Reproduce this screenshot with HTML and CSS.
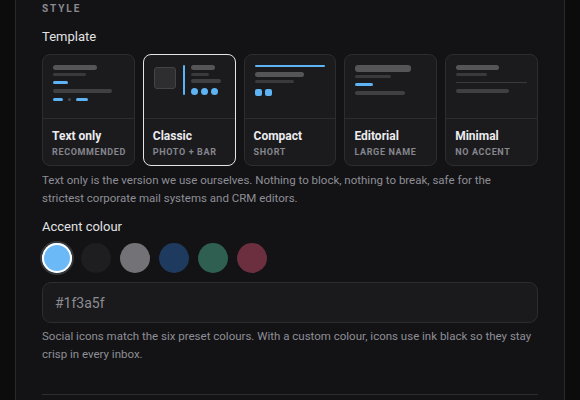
FILE: index.html
```html
<!DOCTYPE html>
<html lang="en">
<head>
<meta charset="utf-8">
<title>Style</title>
<link rel="stylesheet" href="styles.css">
</head>
<body>
<div class="panel">
  <div class="eyebrow">STYLE</div>
  <div class="label">Template</div>
  <div class="cards">
    <div class="card">
      <div class="preview p-text">
        <span class="bar b-44 h5"></span>
        <span class="bar b-33 h3 dim"></span>
        <span class="bar b-15 h3 blue"></span>
        <span class="bar b-59 h4 mid"></span>
        <span class="row">
          <span class="dash"></span><span class="dot"></span><span class="dash w12"></span>
        </span>
      </div>
      <div class="meta"><div class="title">Text only</div><div class="sub">RECOMMENDED</div></div>
    </div>
    <div class="card selected">
      <div class="preview p-classic">
        <span class="photo"></span>
        <span class="vbar"></span>
        <span class="col">
          <span class="bar b-24 h5"></span>
          <span class="bar b-18 h3 dim"></span>
          <span class="bar b-30 h4 mid"></span>
          <span class="circles"><i></i><i></i><i></i></span>
        </span>
      </div>
      <div class="meta"><div class="title">Classic</div><div class="sub">PHOTO + BAR</div></div>
    </div>
    <div class="card">
      <div class="preview p-compact">
        <span class="bar b-70 h2 blue"></span>
        <span class="bar b-49 h5"></span>
        <span class="bar b-39 h3 dim"></span>
        <span class="squares"><i></i><i></i></span>
      </div>
      <div class="meta"><div class="title">Compact</div><div class="sub">SHORT</div></div>
    </div>
    <div class="card">
      <div class="preview p-editorial">
        <span class="bar b-56 h7"></span>
        <span class="bar b-36 h3 dim"></span>
        <span class="bar b-18 h2 blue"></span>
        <span class="bar b-50 h4 mid"></span>
      </div>
      <div class="meta"><div class="title">Editorial</div><div class="sub">LARGE NAME</div></div>
    </div>
    <div class="card">
      <div class="preview p-minimal">
        <span class="bar b-43 h5"></span>
        <span class="bar b-31 h3 dim"></span>
        <span class="rule"></span>
        <span class="bar b-53 h4 mid"></span>
      </div>
      <div class="meta"><div class="title">Minimal</div><div class="sub">NO ACCENT</div></div>
    </div>
  </div>
  <p class="help help1">Text only is the version we use ourselves. Nothing to block, nothing to break, safe for the strictest corporate mail systems and CRM editors.</p>

  <div class="label accent-label">Accent colour</div>
  <div class="swatches">
    <span class="swatch sel" style="background:#6cb9f8"></span>
    <span class="swatch" style="background:#1e1e20"></span>
    <span class="swatch" style="background:#737377"></span>
    <span class="swatch" style="background:#1f3a5f"></span>
    <span class="swatch" style="background:#2f5f50"></span>
    <span class="swatch" style="background:#6b2f3f"></span>
  </div>
  <div class="input">#1f3a5f</div>
  <p class="help help2">Social icons match the six preset colours. With a custom colour, icons use ink black so they stay crisp in every inbox.</p>
  <div class="divider"></div>
</div>
</body>
</html>
```
FILE: styles.css
```css
html, body {
  margin: 0;
  padding: 0;
  background: #0c0c0d;
  font-family: Roboto, "Noto Sans", sans-serif;
  height: 100%;
}
.panel {
  margin: 0 15px;
  min-height: 100%;
  box-sizing: border-box;
  background: #131315;
  border-left: 1px solid #2a2a2d;
  border-right: 1px solid #2a2a2d;
  padding: 0 26px 0 26px;
}
.eyebrow {
  font-size: 10px;
  font-weight: 700;
  letter-spacing: 1.9px;
  color: #8a8a92;
  line-height: 14px;
  padding-top: 2px;
}
.label {
  font-size: 13px;
  line-height: 18px;
  color: #e2e2e4;
  margin-top: 12px;
}
.cards {
  display: grid;
  grid-template-columns: repeat(5, minmax(0, 1fr));
  gap: 8px;
  margin-top: 8px;
}
.card {
  background: #1b1b1e;
  border: 1px solid #2d2d30;
  border-radius: 8px;
  height: 112px;
  box-sizing: border-box;
  display: flex;
  flex-direction: column;
}
.card.selected {
  border-color: #e4e4e6;
}
.preview {
  height: 64px;
  box-sizing: border-box;
  padding: 10px 10px 0 10px;
  border-bottom: 1px solid #2d2d30;
  display: flex;
  flex-direction: column;
  align-items: flex-start;
}
.meta {
  padding: 9px 9px 6px;
}
.title {
  font-size: 12px;
  line-height: 16px;
  font-weight: 700;
  color: #ececee;
}
.sub {
  font-size: 9px;
  line-height: 12px;
  font-weight: 700;
  letter-spacing: 0.65px;
  color: #86868d;
  margin-top: 2px;
  white-space: nowrap;
}
.bar {
  display: block;
  background: #555558;
  border-radius: 3px;
  flex: none;
}
.bar.dim { background: #3a3a3d; }
.bar.mid { background: #404043; }
.bar.blue { background: #5db3f3; }
.h2 { height: 2px; }
.h3 { height: 3px; }
.h4 { height: 4px; }
.h5 { height: 5px; }
.h7 { height: 7px; }
.b-15 { width: 15px; }
.b-18 { width: 18px; }
.b-24 { width: 24px; }
.b-30 { width: 30px; }
.b-31 { width: 31px; }
.b-33 { width: 33px; }
.b-36 { width: 36px; }
.b-39 { width: 39px; }
.b-43 { width: 43px; }
.b-44 { width: 44px; }
.b-49 { width: 49px; }
.b-50 { width: 50px; }
.b-53 { width: 53px; }
.b-56 { width: 56px; }
.b-59 { width: 59px; }
.b-70 { width: 70px; }

/* text only */
.p-text .bar { margin-bottom: 3px; }
.p-text .b-33 { margin-bottom: 5px; }
.p-text .b-15 { margin-bottom: 5px; }
.p-text .b-59 { margin-bottom: 5px; }
.row { display: flex; align-items: center; gap: 5px; }
.dash { width: 10px; height: 3px; border-radius: 2px; background: #5db3f3; }
.dash.w12 { width: 12px; }
.dot { width: 3px; height: 3px; border-radius: 50%; background: #48484b; }

/* classic */
.p-classic { flex-direction: row; align-items: flex-start; }
.photo {
  width: 20px; height: 20px; margin-top: 2px; flex: none;
  background: #2e2e31; border: 1px solid #444447; border-radius: 3px;
}
.vbar { width: 2px; height: 30px; background: #5db3f3; margin-left: 7px; border-radius: 1px; flex: none; }
.col { display: flex; flex-direction: column; margin-left: 6px; }
.col .bar { margin-bottom: 3px; }
.col .b-18 { margin-bottom: 3px; }
.col .b-30 { margin-bottom: 5px; }
.circles { display: flex; gap: 3px; }
.circles i { width: 7px; height: 7px; border-radius: 50%; background: #5db3f3; }

/* compact */
.p-compact .b-70 { margin-bottom: 5px; }
.p-compact .b-49 { margin-bottom: 3px; }
.p-compact .b-39 { margin-bottom: 6px; }
.squares { display: flex; gap: 3px; }
.squares i { width: 7px; height: 7px; border-radius: 2px; background: #5db3f3; }

/* editorial */
.p-editorial .b-56 { margin-bottom: 3px; }
.p-editorial .b-36 { margin-bottom: 5px; }
.p-editorial .b-18 { margin-bottom: 5px; height: 2.5px; }

/* minimal */
.p-minimal .b-43 { margin-bottom: 3px; }
.p-minimal .b-31 { margin-bottom: 6px; }
.rule { display: block; width: 71px; height: 1px; background: #3a3a3d; margin-bottom: 6px; }

.help {
  margin: 6px 0 0;
  font-size: 11.5px;
  line-height: 17.6px;
  color: #8e8e96;
}
.help1 { max-width: 470px; }
.accent-label { margin-top: 11px; }
.swatches {
  display: flex;
  gap: 9px;
  margin-top: 7px;
}
.swatch {
  width: 30px;
  height: 30px;
  border-radius: 50%;
  display: block;
}
.swatch.sel {
  box-shadow: inset 0 0 0 2px #ffffff, 0 0 0 2px #38383b;
}
.input {
  margin-top: 9px;
  height: 41px;
  box-sizing: border-box;
  border: 1px solid #2d2d30;
  background: #1a1a1d;
  border-radius: 9px;
  padding: 0 12px;
  display: flex;
  align-items: center;
  font-size: 14px;
  color: #8c8c92;
}
.help2 { margin-top: 5px; }
.divider {
  margin-top: 31px;
  height: 1px;
  background: #2e2e31;
}
```
